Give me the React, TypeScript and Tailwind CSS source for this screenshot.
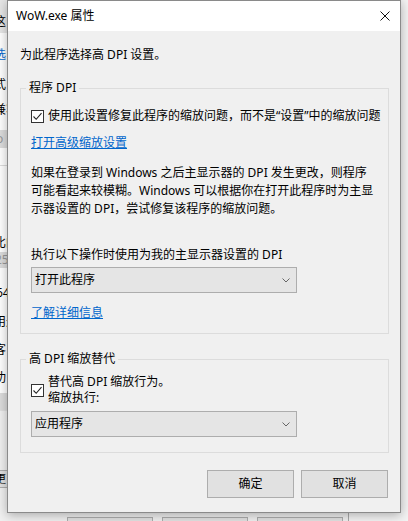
import React from 'react';

const font = "font-['Noto_Sans','Noto_Sans_CJK_SC',sans-serif]";

const Checkbox = () => (
  <div className="w-[13px] h-[13px] shrink-0 border border-[#333] bg-white flex items-center justify-center">
    <svg width="11" height="11" viewBox="0 0 11 11">
      <path d="M1.5 5.5 L4.2 8.3 L9.5 2.2" fill="none" stroke="#222" strokeWidth="1.1" />
    </svg>
  </div>
);

const Select = ({ value }: { value: string }) => (
  <div className="w-[266px] h-[26px] border border-[#adadad] bg-[#e5e5e5] flex items-center justify-between pl-[3px] pr-[6px]">
    <span className="leading-[18px]">{value}</span>
    <svg width="8" height="5" viewBox="0 0 8 5">
      <path d="M0.5 0.5 L4 4 L7.5 0.5" fill="none" stroke="#666" strokeWidth="1" />
    </svg>
  </div>
);

const GroupBox = ({ title, className, children }: any) => (
  <div className={`border border-[#dcdcdc] px-[10px] ${className}`}>
    <div className="-mt-[10px] -ml-[5px] w-fit bg-[#f0f0f0] px-[3px] leading-[18px]">{title}</div>
    {children}
  </div>
);

const Button = ({ label }: { label: string }) => (
  <div className="w-[87px] h-[28px] border border-[#adadad] bg-[#e1e1e1] flex items-center justify-center">{label}</div>
);

// strip of the window behind the dialog, only 7px of it shows
const BackgroundWindow = () => (
  <div className="w-[349px] h-full flex flex-col bg-white border-r border-[#a8a8a8] text-[12px] leading-[18px] overflow-hidden">
    <div className="h-[33px] bg-[#e6e6e6] pt-[13px] pl-[0px]"><span className="-ml-[6px] inline-block">这</span></div>
    <div className="mt-[13px] text-[#0066cc] underline"><span className="-ml-[6px] inline-block">选</span></div>
    <div className="mt-[12px]"><span className="-ml-[6px] inline-block">式</span></div>
    <div className="mt-[7px]"><span className="-ml-[6px] inline-block">兼容</span></div>
    <div className="mt-[11px] h-[18px] bg-[#dcdcdc] text-[#999]"><span className="-ml-[4px] inline-block">o</span></div>
    <div className="mt-[17px] h-px bg-[#dcdcdc]" />
    <div className="mt-[68px]"><span className="-ml-[6px] inline-block">比的</span></div>
    <div className="h-[16px] bg-[#dcdcdc] text-[#999] leading-[16px]"><span className="-ml-[5px] inline-block">25</span></div>
    <div className="mt-[16px]"><span className="-ml-[4px] inline-block">64</span></div>
    <div className="mt-[11px]"><span className="-ml-[6px] inline-block">用途</span></div>
    <div className="mt-[10px]"><span className="-ml-[6px] inline-block">客</span></div>
    <div className="mt-[10px]"><span className="-ml-[6px] inline-block">功</span></div>
    <div className="mt-[6px] h-[17px] bg-[#dcdcdc]" />
    <div className="flex-1 bg-[#f0f0f0] border-t border-[#e0e0e0] flex flex-col">
      <div className="mt-[59px] h-[18px] w-[20px] -ml-[12px] bg-[#e1e1e1] border border-[#adadad] flex items-center justify-end pr-[1px] text-[11px]">更</div>
      <div className="mt-auto flex gap-[9px] pl-[67px] -mb-[20px]">
        <div className="w-[86px] h-[24px] border border-[#adadad] bg-[#e1e1e1]" />
        <div className="w-[86px] h-[24px] border border-[#adadad] bg-[#e1e1e1]" />
        <div className="w-[86px] h-[24px] border border-[#adadad] bg-[#e1e1e1]" />
      </div>
    </div>
  </div>
);

export default function App() {
  return (
    <div className={`relative w-[408px] h-[521px] overflow-hidden bg-[#f3f3f3] text-black text-[12px] ${font}`}>
      <BackgroundWindow />

      <div className="absolute left-[7px] top-0 w-[394px] h-[513px] border border-[#8a8a8a] bg-[#f0f0f0] shadow-[0_2px_10px_rgba(0,0,0,0.3)] flex flex-col">
        <div className="h-[30px] bg-white flex items-center justify-between pl-[8px] pr-[10px]">
          <span className="leading-[18px]">WoW.exe 属性</span>
          <svg width="10" height="10" viewBox="0 0 10 10">
            <path d="M0.5 0.5 L9.5 9.5 M9.5 0.5 L0.5 9.5" stroke="#111" strokeWidth="1" />
          </svg>
        </div>

        <div className="flex flex-col pl-[12px] pr-[11px] pt-[15px]">
          <div className="leading-[18px]">为此程序选择高 DPI 设置。</div>

          <GroupBox title="程序 DPI" className="mt-[24px] pb-[11px]">
            <div className="mt-[10px] flex items-center gap-[4px] leading-[18px] whitespace-nowrap">
              <Checkbox />
              <span>使用此设置修复此程序的缩放问题，而不是“设置”中的缩放问题</span>
            </div>
            <div className="mt-[9px] leading-[18px] text-[#0066cc] underline w-fit">打开高级缩放设置</div>
            <div className="mt-[12px] leading-[18px] whitespace-nowrap">
              <div>如果在登录到 Windows 之后主显示器的 DPI 发生更改，则程序</div>
              <div>可能看起来较模糊。Windows 可以根据你在打开此程序时为主显</div>
              <div>示器设置的 DPI，尝试修复该程序的缩放问题。</div>
            </div>
            <div className="mt-[28px] leading-[18px]">执行以下操作时使用为我的主显示器设置的 DPI</div>
            <div className="mt-[3px]">
              <Select value="打开此程序" />
            </div>
            <div className="mt-[11px] leading-[18px] text-[#0066cc] underline w-fit">了解详细信息</div>
          </GroupBox>

          <GroupBox title="高 DPI 缩放替代" className="mt-[25px] pb-[15px]">
            <div className="mt-[6px] flex items-center gap-[4px]">
              <Checkbox />
              <div className="leading-[16px]">
                <div>替代高 DPI 缩放行为。</div>
                <div>缩放执行:</div>
              </div>
            </div>
            <div className="mt-[5px]">
              <Select value="应用程序" />
            </div>
          </GroupBox>

          <div className="mt-[17px] mr-[1px] flex justify-end gap-[7px]">
            <Button label="确定" />
            <Button label="取消" />
          </div>
        </div>
      </div>
    </div>
  );
}
